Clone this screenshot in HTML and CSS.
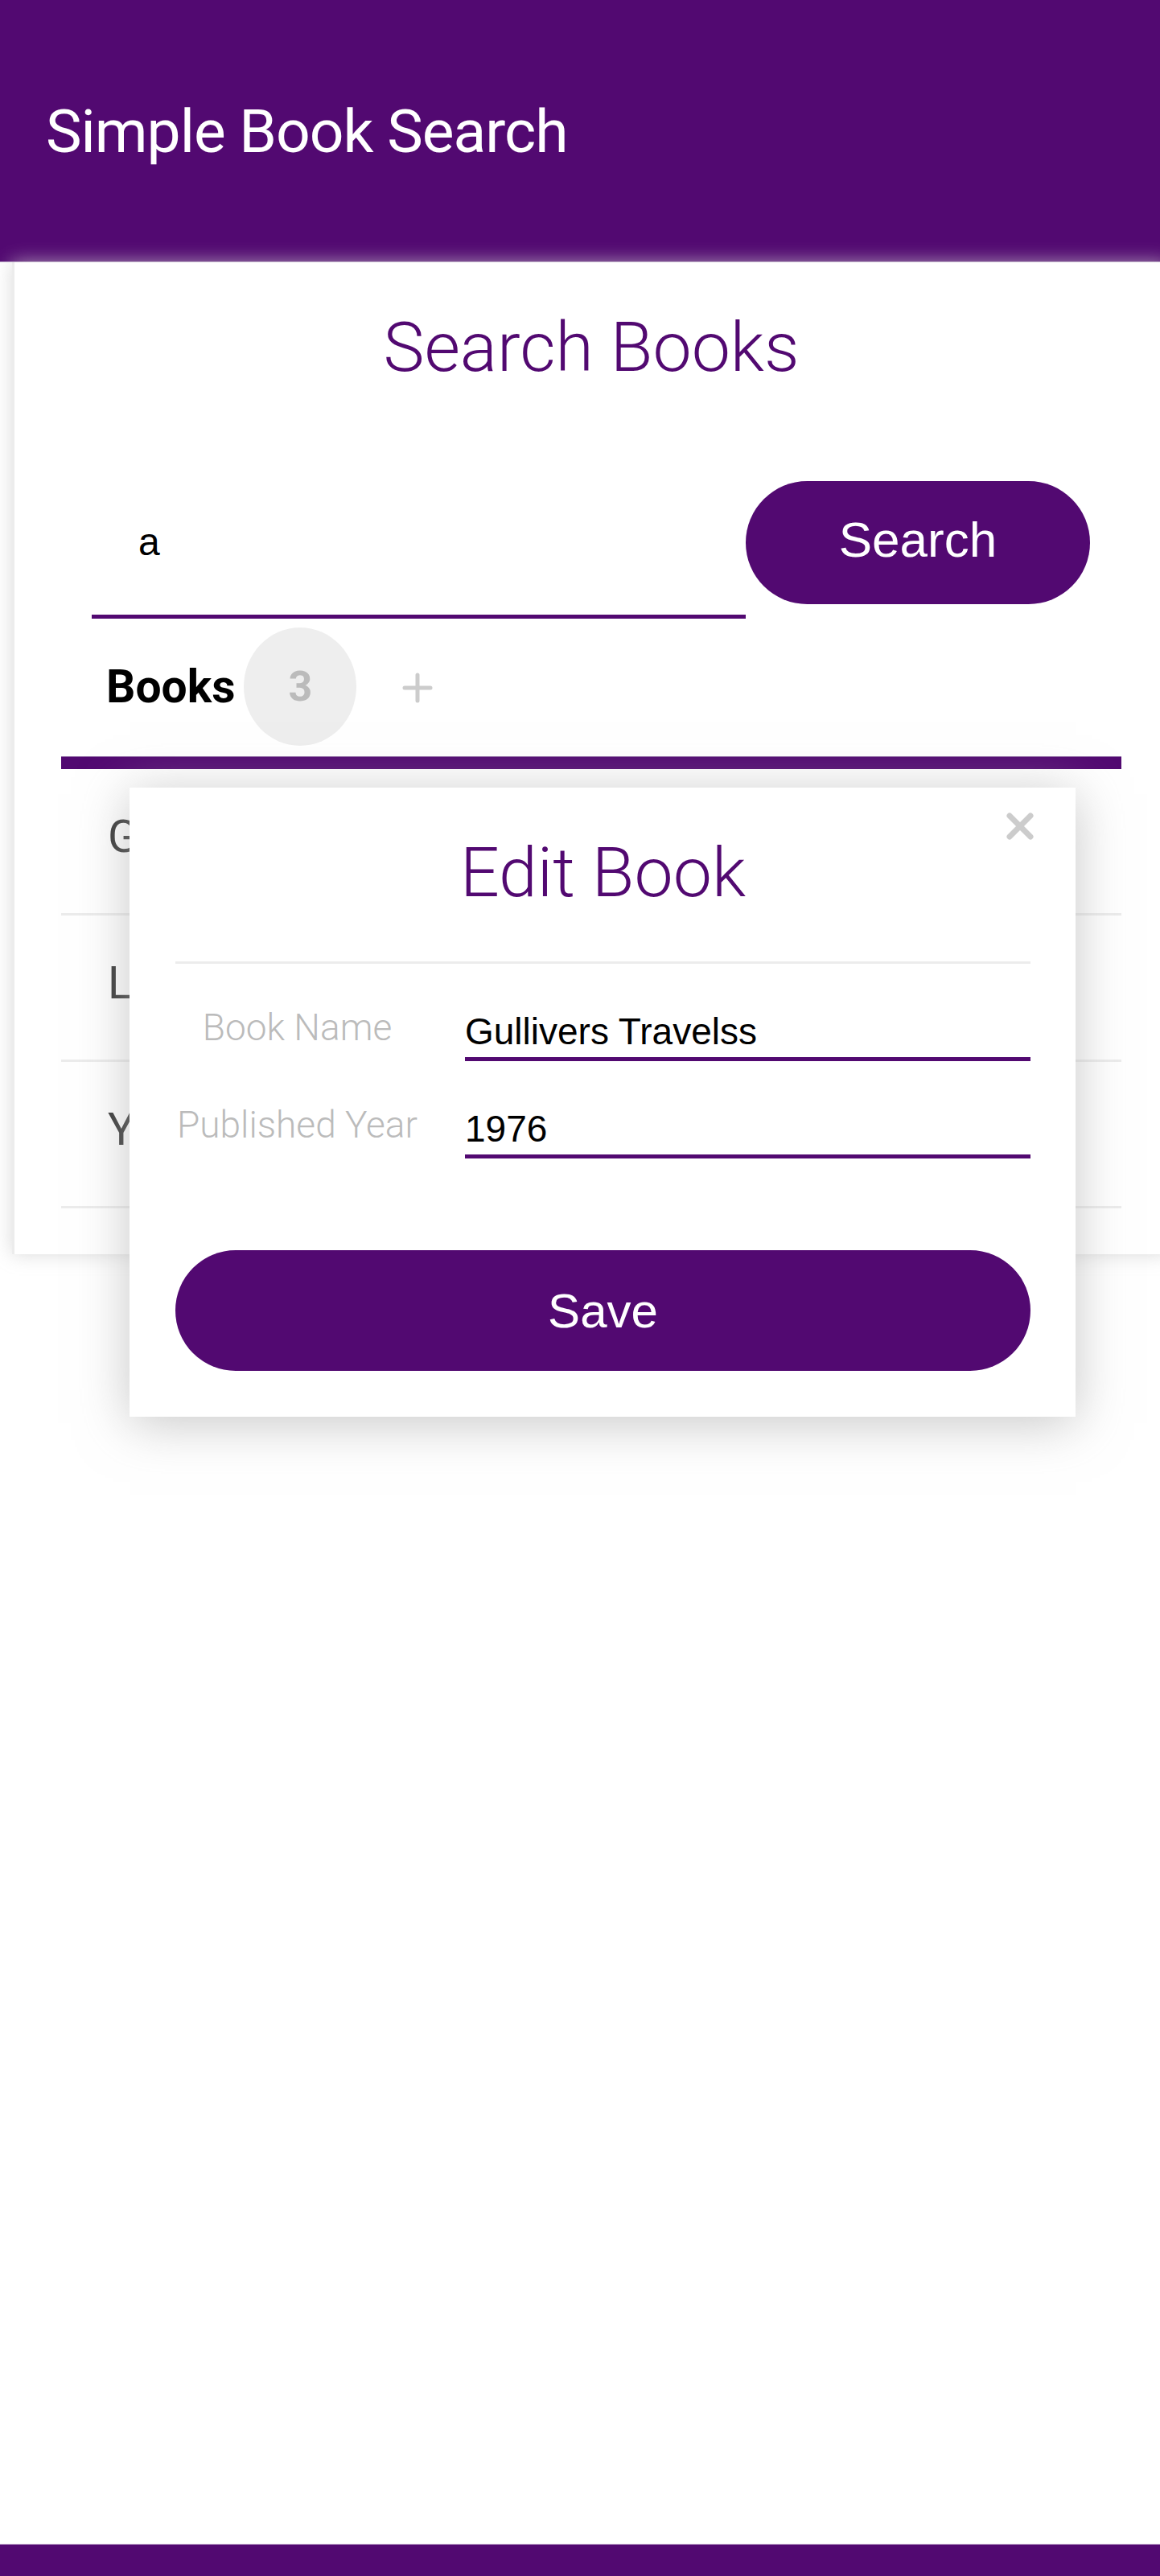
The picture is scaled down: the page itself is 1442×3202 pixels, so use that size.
FILE: index.html
```html
<!DOCTYPE html>
<html lang="en">
<head>
<meta charset="utf-8">
<title>Simple Book Search</title>
<link rel="stylesheet" href="styles.css">
</head>
<body>
<div class="page">
  <header class="appbar">
    <h1 class="app-title">Simple Book Search</h1>
  </header>

  <main class="card">
    <h2 class="card-title">Search Books</h2>
    <div class="search-row">
      <div class="search-input">a</div>
      <button class="search-btn" type="button">Search</button>
    </div>
    <div class="tabs">
      <div class="tab-label">Books</div>
      <div class="badge">3</div>
      <svg class="plus" viewBox="0 0 38 38" width="38" height="38" aria-hidden="true">
        <path d="M19 3 V35 M3 19 H35" stroke="#cccccc" stroke-width="5" stroke-linecap="round" fill="none"/>
      </svg>
    </div>
    <div class="tab-bar"></div>
    <ul class="book-list">
      <li class="book-row">Gullivers Travels</li>
      <li class="book-row">Little Women</li>
      <li class="book-row">Year of Wonders</li>
    </ul>
  </main>

  <div class="spacer"></div>
  <footer class="bottombar"></footer>

  <div class="modal">
    <svg class="close" viewBox="0 0 36 36" width="36" height="36" aria-hidden="true">
      <path d="M5 5 L31 31 M31 5 L5 31" stroke="#cccccc" stroke-width="7" stroke-linecap="round" fill="none"/>
    </svg>
    <h2 class="modal-title">Edit Book</h2>
    <div class="modal-divider"></div>
    <div class="form-grid">
      <div class="form-label">Book Name</div>
      <div class="form-field">Gullivers Travelss</div>
      <div class="form-label">Published Year</div>
      <div class="form-field">1976</div>
    </div>
    <button class="save-btn" type="button">Save</button>
  </div>
</div>
</body>
</html>
```

FILE: styles.css
```css
* { box-sizing: border-box; }

html, body {
  margin: 0;
  padding: 0;
  background: #ffffff;
}

body {
  overflow-x: hidden;
  font-family: Roboto, "Noto Sans", Arial, sans-serif;
}

.page {
  position: relative;
  width: 1442px;
  min-height: 3202px;
  display: flex;
  flex-direction: column;
}

/* ---------- App bar ---------- */
.appbar {
  height: 326px;
  background: #520971;
  padding: 113px 0 0 57px;
  border-bottom: 1px solid #b9a2c6;
}

.app-title {
  margin: 0;
  font-family: Roboto, sans-serif;
  font-weight: 400;
  font-size: 75px;
  letter-spacing: -1px;
  line-height: 100px;
  color: #ffffff;
}

/* ---------- Card ---------- */
.card {
  position: relative;
  margin-left: 15px;
  width: 1437px;
  background: #ffffff;
  border-left: 3px solid #ececec;
  box-shadow: 0 0 22px rgba(205, 205, 205, 0.75);
  padding: 56px 0 57px;
}

.card-title {
  margin: 0;
  text-align: center;
  font-family: Roboto, sans-serif;
  font-weight: 300;
  font-size: 86px;
  line-height: 100px;
  color: #520971;
}

.search-row {
  display: flex;
  align-items: flex-start;
  margin-top: 116px;
  padding: 0 97px 0 96px;
}

.search-input {
  flex: 1;
  height: 171px;
  padding: 46px 0 0 58px;
  border-bottom: 5px solid #520971;
  font-family: "Liberation Sans", Arial, sans-serif;
  font-size: 48px;
  line-height: 60px;
  color: #000000;
}

.search-btn {
  width: 428px;
  height: 153px;
  border: none;
  border-radius: 77px;
  background: #520971;
  color: #ffffff;
  font-family: "Liberation Sans", Arial, sans-serif;
  font-size: 62px;
  padding: 0 0 8px;
}

.tabs {
  display: flex;
  align-items: center;
  margin: 0 58px;
  padding: 11px 0 13px 56px;
}

.tab-label {
  font-family: Roboto, sans-serif;
  font-weight: 700;
  font-size: 57px;
  color: #000000;
  margin-right: 11px;
}

.badge {
  width: 140px;
  height: 147px;
  border-radius: 50%;
  background: #eeeeee;
  color: #bbbbbb;
  display: flex;
  align-items: center;
  justify-content: center;
  font-family: Roboto, sans-serif;
  font-weight: 700;
  font-size: 52px;
}

.plus {
  display: block;
  margin-left: 57px;
  margin-top: 2px;
}

.tab-bar {
  margin: 0 58px;
  height: 16px;
  background: #520971;
  border-top: 1px solid #8e67a3;
}

.book-list {
  list-style: none;
  margin: 0 58px;
  padding: 0;
}

.book-row {
  height: 182px;
  padding: 0 0 10px 58px;
  border-bottom: 3px solid #ececec;
  font-family: Roboto, sans-serif;
  font-weight: 400;
  font-size: 56px;
  line-height: 169px;
  color: #333333;
  white-space: nowrap;
  overflow: hidden;
}

.spacer { flex: 1; }

/* ---------- Bottom bar ---------- */
.bottombar {
  height: 40px;
  background: #520971;
  border-top: 1px solid #c3a9d0;
}

/* ---------- Modal ---------- */
.modal {
  position: absolute;
  top: 979px;
  left: 161px;
  width: 1176px;
  height: 782px;
  background: #ffffff;
  box-shadow: 0 8px 60px rgba(175, 175, 175, 0.7);
  padding: 56px 56px 57px 57px;
}

.close {
  position: absolute;
  top: 30px;
  right: 51px;
  display: block;
}

.modal-title {
  margin: 0;
  text-align: center;
  font-family: Roboto, sans-serif;
  font-weight: 300;
  font-size: 86px;
  line-height: 100px;
  color: #520971;
}

.modal-divider {
  margin-top: 60px;
  height: 3px;
  background: #ececec;
}

.form-grid {
  display: grid;
  grid-template-columns: 303px 1fr;
  column-gap: 57px;
  row-gap: 56px;
  margin-top: 56px;
}

.form-label {
  text-align: center;
  font-family: Roboto, sans-serif;
  font-weight: 300;
  font-size: 46px;
  line-height: 46px;
  color: #bbbbbb;
  white-space: nowrap;
}

.form-field {
  font-family: "Liberation Sans", Arial, sans-serif;
  font-size: 46px;
  line-height: 56px;
  color: #000000;
  padding-bottom: 4px;
  border-bottom: 5px solid #520971;
}

.save-btn {
  display: block;
  width: 100%;
  height: 150px;
  margin-top: 114px;
  border: none;
  border-radius: 75px;
  background: #520971;
  color: #ffffff;
  font-family: "Liberation Sans", Arial, sans-serif;
  font-size: 60px;
  padding: 0;
}
```
